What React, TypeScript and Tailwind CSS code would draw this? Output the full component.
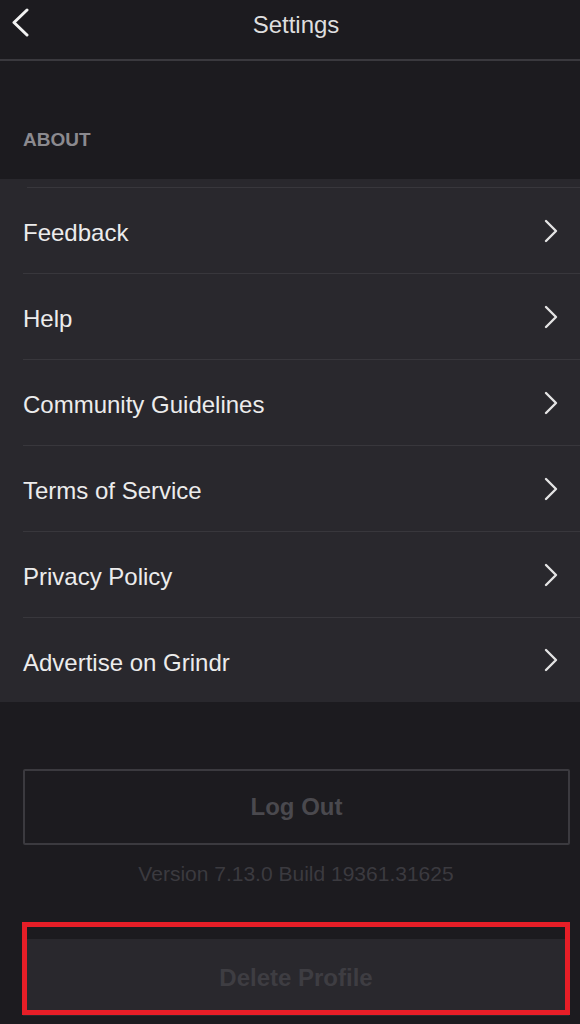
import React from 'react'

const items = [
  'Feedback',
  'Help',
  'Community Guidelines',
  'Terms of Service',
  'Privacy Policy',
  'Advertise on Grindr',
]

function Chevron({ className }: { className?: string }) {
  return (
    <svg className={className} viewBox="0 0 14 24" fill="none" stroke="currentColor" strokeWidth={2.4} strokeLinecap="round" strokeLinejoin="round">
      <path d="M2 2l10 10-10 10" />
    </svg>
  )
}

export default function App() {
  return (
    <div className="w-[580px] h-[1024px] overflow-hidden bg-[#1c1b1f] font-['Liberation_Sans',Arial,sans-serif]">
      {/* header */}
      <div className="relative h-[61px] flex items-center justify-center border-b-2 border-[#3a393e]">
        <button className="absolute left-[11px] top-[8px] text-[#f2f2f2]">
          <svg className="w-[19px] h-[29px]" viewBox="0 0 19 29" fill="none" stroke="currentColor" strokeWidth={3} strokeLinecap="round" strokeLinejoin="round">
            <path d="M16 2L3 14.5 16 27" />
          </svg>
        </button>
        <h1 className="ml-[12px] text-[24px] text-[#dedede] -mt-[10px] leading-none">Settings</h1>
      </div>

      {/* section title */}
      <div className="pt-[68px] pb-[28px] px-[23px]">
        <p className="text-[19px] leading-[22px] font-bold text-[#8b8a8f]">ABOUT</p>
      </div>

      {/* list */}
      <div className="bg-[#29282d] pt-[8px]">
        <div className="border-t border-[#38373c] ml-[27px]" />
        {items.map((label, i) => (
          <div
            key={label}
            className={`ml-[23px] pr-[22px] pt-[5px] flex items-center justify-between ${i < items.length - 1 ? 'h-[86px] border-b border-[#38373c]' : 'h-[84px]'}`}
          >
            <span className="text-[24px] text-[#ececec]">{label}</span>
            <Chevron className="w-[14px] h-[24px] text-[#e4e4e4] -mt-[5px]" />
          </div>
        ))}
      </div>

      {/* log out */}
      <div className="mt-[67px] ml-[23px] mr-[10px] h-[76px] border-2 border-[#3b3a3f] rounded-[2px] flex items-center justify-center">
        <span className="text-[24px] font-bold text-[#4a494e]">Log Out</span>
      </div>

      <p className="mt-[17px] pl-[12px] text-center text-[21px] leading-[24px] text-[#3b3a3f]">Version 7.13.0 Build 19361.31625</p>

      {/* delete profile */}
      <div className="relative mt-[36px] ml-[22px] mr-[10px] h-[93px] pt-[17px]">
        <div className="mx-[1px] h-[77px] bg-[#29282d] flex items-center justify-center">
          <span className="text-[24px] font-bold text-[#3e3d42]">Delete Profile</span>
        </div>
        <div className="absolute inset-0 border-[5px] border-[#e61e27]" />
      </div>
    </div>
  )
}
